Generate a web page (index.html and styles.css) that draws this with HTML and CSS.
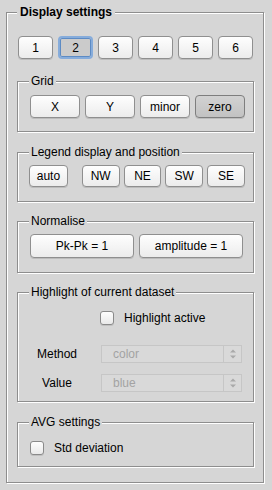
FILE: index.html
```html
<!DOCTYPE html>
<html lang="en">
<head>
    <meta charset="UTF-8">
    <meta name="viewport" content="width=device-width, initial-scale=1.0">
    <title>Display settings</title>
    <link rel="stylesheet" href="styles.css">
</head>
<body>
  <fieldset class="group main">
    <legend>Display settings</legend>

    <div class="btn-row row-display">
      <button class="btn">1</button>
      <button class="btn is-selected">2</button>
      <button class="btn">3</button>
      <button class="btn">4</button>
      <button class="btn">5</button>
      <button class="btn">6</button>
    </div>

    <fieldset class="group sub grid-box">
      <legend>Grid</legend>
      <div class="btn-row row-grid">
        <button class="btn">X</button>
        <button class="btn">Y</button>
        <button class="btn">minor</button>
        <button class="btn is-pressed">zero</button>
      </div>
    </fieldset>

    <fieldset class="group sub legend-box">
      <legend>Legend display and position</legend>
      <div class="btn-row row-legend">
        <button class="btn btn-auto">auto</button>
        <button class="btn">NW</button>
        <button class="btn">NE</button>
        <button class="btn">SW</button>
        <button class="btn">SE</button>
      </div>
    </fieldset>

    <fieldset class="group sub norm-box">
      <legend>Normalise</legend>
      <div class="btn-row row-norm">
        <button class="btn">Pk-Pk = 1</button>
        <button class="btn">amplitude = 1</button>
      </div>
    </fieldset>

    <fieldset class="group sub highlight-box">
      <legend>Highlight of current dataset</legend>
      <label class="check-row check-highlight">
        <span class="checkbox"></span>
        <span>Highlight active</span>
      </label>
      <div class="field-row field-method">
        <span class="field-label">Method</span>
        <div class="select is-disabled">
          <span class="select-text">color</span>
          <span class="stepper">
            <svg width="8" height="12" viewBox="0 0 8 12"><path d="M1 4.5 L4 1.5 L7 4.5 Z M1 7.5 L4 10.5 L7 7.5 Z" fill="#a9a9a9"/></svg>
          </span>
        </div>
      </div>
      <div class="field-row field-value">
        <span class="field-label">Value</span>
        <div class="select is-disabled">
          <span class="select-text">blue</span>
          <span class="stepper">
            <svg width="8" height="12" viewBox="0 0 8 12"><path d="M1 4.5 L4 1.5 L7 4.5 Z M1 7.5 L4 10.5 L7 7.5 Z" fill="#a9a9a9"/></svg>
          </span>
        </div>
      </div>
    </fieldset>

    <fieldset class="group sub avg-box">
      <legend>AVG settings</legend>
      <label class="check-row check-std">
        <span class="checkbox"></span>
        <span>Std deviation</span>
      </label>
    </fieldset>
  </fieldset>
</body>
</html>
```

FILE: styles.css
```css
* {
    margin: 0;
    padding: 0;
    box-sizing: border-box;
}

body {
    font-family: "Liberation Sans", Arial, sans-serif;
    font-size: 12px;
    color: #000;
    background-color: #d6d6d6;
    width: 272px;
    height: 490px;
    overflow: hidden;
}

/* Group boxes (etched border) */
.group {
    border: 1px solid #8e8e8e;
    box-shadow: inset 1px 1px 0 #fff, 1px 1px 0 #fff;
    min-width: 0;
}

.group > legend {
    background-color: #d6d6d6;
    padding: 0 2px;
    line-height: 15px;
    margin-left: -1px;
}

.main {
    margin: 4px 0 0 6px;
    width: 258px;
    padding: 0 9px 15px 10px;
}

.main > legend {
    font-weight: bold;
    line-height: 17px;
    padding: 0 3px;
    margin-left: 0;
}

.sub {
    padding: 0 8px 14px 12px;
}

.grid-box {
    margin-top: 15px;
    padding-bottom: 13px;
}

.legend-box {
    margin-top: 13px;
}

.norm-box {
    margin-top: 12px;
}

.highlight-box {
    margin-top: 12px;
    padding-bottom: 9px;
}

.avg-box {
    margin-top: 13px;
    padding-bottom: 11px;
}

/* Buttons */
.btn-row {
    display: flex;
}

.btn {
    font-family: inherit;
    font-size: 12px;
    color: #000;
    height: 23px;
    border: 1px solid #8f8f8f;
    border-radius: 4px;
    background: linear-gradient(#fefefe, #ececec);
    box-shadow: 0 1px 0 rgba(0, 0, 0, 0.12);
    display: flex;
    align-items: center;
    justify-content: center;
}

.row-display {
    margin: 15px 0 0 1px;
    gap: 5px;
}

.row-display .btn {
    width: 35px;
}

.btn.is-selected {
    background: #cbcbcb;
    border: 2px solid #86acdb;
    box-shadow: inset 0 0 0 1px #5d8bc4;
}

.row-grid {
    margin-top: 6px;
    gap: 5px;
}

.row-grid .btn {
    width: 50px;
}

.btn.is-pressed {
    background: linear-gradient(#d2d2d2, #c2c2c2);
    border-color: #7e7e7e;
}

.row-legend {
    margin: 5px 0 0 -1px;
    gap: 4px;
}

.row-legend .btn {
    width: 38px;
    height: 22px;
}

.row-legend .btn-auto {
    width: 39px;
    margin-right: 10px;
}

.row-norm {
    margin-top: 5px;
    gap: 5px;
}

.row-norm .btn {
    width: 104px;
    height: 24px;
}

/* Checkboxes */
.check-row {
    display: flex;
    align-items: center;
    gap: 10px;
    height: 14px;
    margin-top: 11px;
}

.check-highlight {
    margin-left: 70px;
}

.checkbox {
    width: 14px;
    height: 14px;
    border: 1px solid #8a8a8a;
    border-radius: 3px;
    background: linear-gradient(#fefefe, #e9e9e9);
    box-shadow: 0 1px 0 rgba(0, 0, 0, 0.1);
}

/* Label + popup rows */
.field-row {
    display: flex;
    align-items: center;
}

.field-method {
    margin-top: 20px;
}

.field-value {
    margin-top: 11px;
}

.field-label {
    width: 54px;
    text-align: center;
    margin-right: 17px;
}

.select {
    width: 141px;
    height: 18px;
    display: flex;
    align-items: center;
    border: 1px solid #c6c6c6;
    background-color: #d9d9d9;
}

.select-text {
    flex: 1;
    padding-left: 11px;
}

.select.is-disabled .select-text {
    color: #a3a3a3;
}

.stepper {
    width: 18px;
    height: 100%;
    border-left: 1px solid #c6c6c6;
    display: flex;
    align-items: center;
    justify-content: center;
}
```
